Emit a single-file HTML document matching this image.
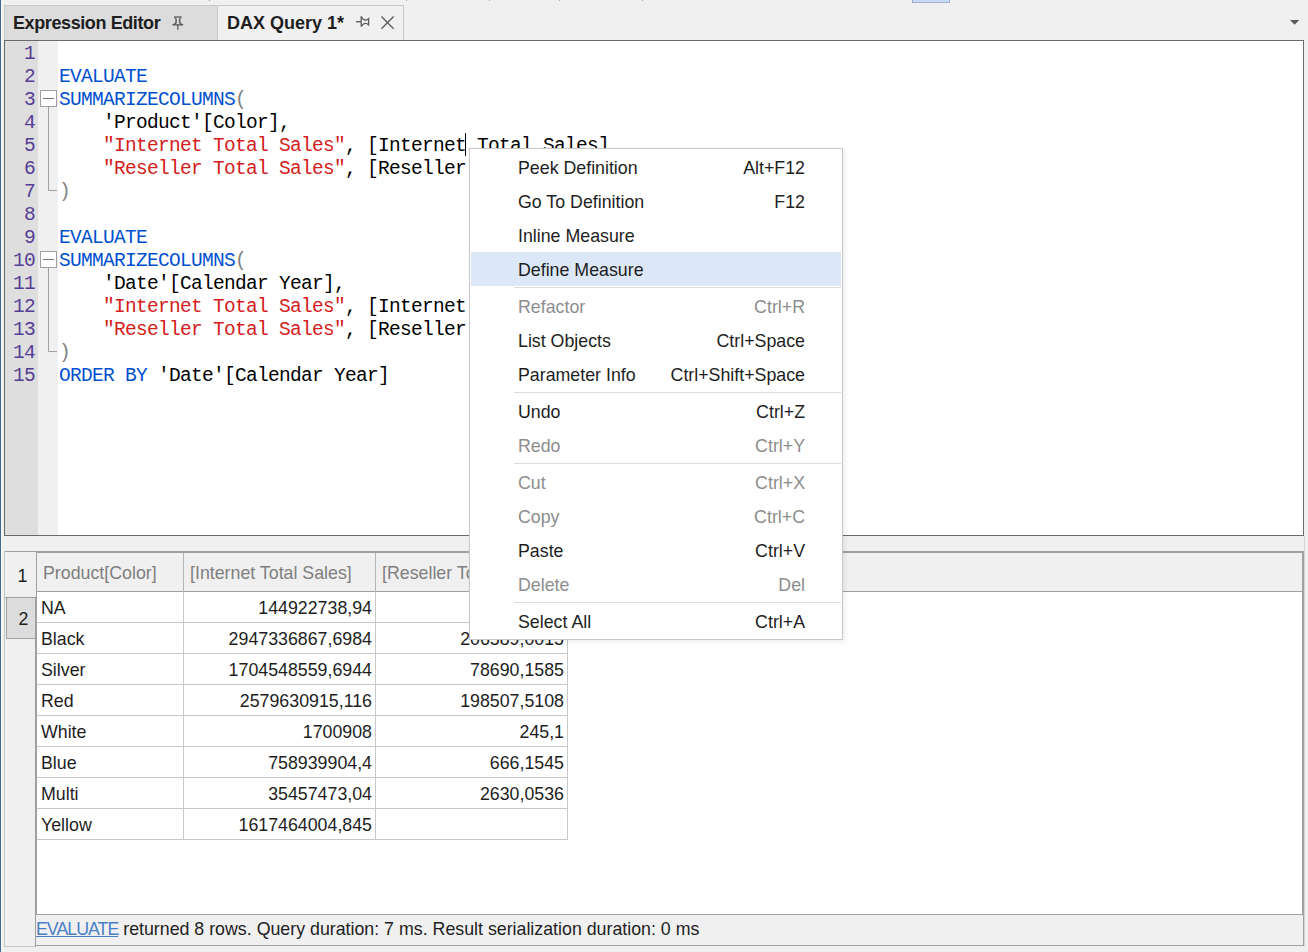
<!DOCTYPE html>
<html><head><meta charset="utf-8"><style>
*{box-sizing:border-box;margin:0;padding:0}
html,body{width:1308px;height:952px;overflow:hidden;background:#f0f0f0;font-family:"Liberation Sans",sans-serif;position:relative}
.abs{position:absolute}
.tab{position:absolute;top:5px;height:35px;font-weight:bold;font-size:18px;color:#1e1e1e;line-height:35px;white-space:nowrap}
#editor{position:absolute;left:4px;top:40px;width:1300px;height:496px;border:1px solid #6b6b6b;background:#fff;overflow:hidden}
#gut{position:absolute;left:0;top:0;width:33px;height:100%;background:#dedede}
#fold{position:absolute;left:33px;top:0;width:20px;height:100%;background:#f0f0f0}
.ln{position:absolute;left:0;width:30px;text-align:right;height:23px;line-height:23px;font-family:"Liberation Mono",monospace;font-size:19.5px;letter-spacing:-0.7px;color:#563d94}
.cl{position:absolute;left:54px;height:23px;line-height:23px;font-family:"Liberation Mono",monospace;font-size:19.5px;letter-spacing:-0.7px;color:#000;white-space:pre}
.k{color:#0050d0}.s{color:#d4201c}.p{color:#808080}
#menu{position:absolute;left:469px;top:148px;width:374px;height:492px;background:#fff;border:1px solid #c8c8c8;box-shadow:2px 2px 5px rgba(0,0,0,0.07);padding:1px}
.mi{position:relative;height:34px;line-height:34px;font-size:17.8px;color:#1e1e1e;white-space:nowrap}
.mi .t{position:absolute;left:47px;top:1px}
.mi .sc{position:absolute;right:36px;top:1px}
.mi.dis{color:#8d8d8d}
.mi.hl{background:#dce7f8}
.sep{height:3px;position:relative}
.sep:after{content:"";position:absolute;left:43px;right:0;top:1px;height:1px;background:#dcdcdc}
.cell{position:absolute;height:31px;line-height:31px;font-size:17.8px;color:#1e1e1e;white-space:nowrap;overflow:hidden}
</style></head><body>
<div class="abs" style="left:0;top:0;width:1px;height:952px;background:#41649a"></div>
<div class="abs" style="left:1px;top:0;width:1px;height:952px;background:#fbfbfb"></div>
<div class="abs" style="left:209px;top:0;width:1px;height:1px;background:#9a9a9a"></div><div class="abs" style="left:406px;top:0;width:1px;height:1px;background:#b0b0b0"></div><div class="abs" style="left:489px;top:0;width:1px;height:1px;background:#b0b0b0"></div><div class="abs" style="left:559px;top:0;width:1px;height:1px;background:#b0b0b0"></div><div class="abs" style="left:642px;top:0;width:1px;height:1px;background:#b0b0b0"></div>
<div class="abs" style="left:912px;top:0;width:38px;height:3px;background:#c9daf4;border:1px solid #9fb0cf;border-top:none"></div>
<div class="tab" style="left:4px;width:214px;background:#dcdcdc;border-top:1px solid #c8c8c8;border-left:1px solid #c8c8c8;border-right:1px solid #c8c8c8"><span style="position:absolute;left:8px;letter-spacing:-0.4px">Expression Editor</span></div>
<div class="tab" style="left:218px;width:186px;background:#f0f0f0;border-top:1px solid #c8c8c8;border-right:1px solid #c8c8c8"><span style="position:absolute;left:9px">DAX Query 1*</span></div>
<svg class="abs" style="left:1285px;top:15px" width="20" height="15"><polygon points="5,5 14.2,5 9.6,9.8" fill="#5a5a5a"/></svg>
<svg class="abs" style="left:168px;top:12px" width="20" height="20" viewBox="0 0 20 20" fill="none" stroke="#5a5a5a" stroke-width="1.3">
<path d="M6,5 H13.7"/><path d="M7.3,5.5 Q9.2,8.5 7.6,11.6 L4.5,12.8 H15 L12.2,11.6 Q10.6,8.5 12.5,5.5"/><path d="M9.8,12.8 V17.8"/></svg>
<svg class="abs" style="left:352px;top:12px" width="20" height="20" viewBox="0 0 20 20" fill="none" stroke="#5a5a5a" stroke-width="1.3">
<path d="M4,9.7 H9.2"/><path d="M9.2,4.3 V14.6"/><path d="M9.4,4.8 Q11,7.8 13,8 Q15,8.2 16.6,6.6 V12.9 Q15,11.2 13,11.4 Q11,11.6 9.4,14.4"/></svg>
<svg class="abs" style="left:380px;top:15px" width="16" height="16" viewBox="0 0 16 16" fill="none" stroke="#5f5f5f" stroke-width="1.4">
<path d="M1.4,1.6 L13.6,13.8 M13.6,1.6 L1.4,13.8"/></svg>
<div id="editor"><div id="gut"></div><div id="fold"></div>
<svg class="abs" style="left:35px;top:49px" width="22" height="320" viewBox="0 0 22 320" fill="none" stroke="#a0a0a0" stroke-width="1">
<rect x="0.5" y="0.5" width="16" height="16" fill="#fff"/><path d="M3,8.5 H14" stroke="#7a7a7a"/><path d="M8.5,17 V100.5 H17"/>
<rect x="0.5" y="161.5" width="16" height="16" fill="#fff"/><path d="M3,169.5 H14" stroke="#7a7a7a"/><path d="M8.5,178 V261.5 H17"/>
</svg>
<div class="ln" style="top:2px">1</div>
<div class="ln" style="top:25px">2</div>
<div class="cl" style="top:25px"><span class="k">EVALUATE</span></div>
<div class="ln" style="top:48px">3</div>
<div class="cl" style="top:48px"><span class="k">SUMMARIZECOLUMNS</span><span class="p">(</span></div>
<div class="ln" style="top:71px">4</div>
<div class="cl" style="top:71px">    'Product'[Color],</div>
<div class="ln" style="top:94px">5</div>
<div class="cl" style="top:94px">    <span class="s">"Internet Total Sales"</span>, [Internet Total Sales]</div>
<div class="ln" style="top:117px">6</div>
<div class="cl" style="top:117px">    <span class="s">"Reseller Total Sales"</span>, [Reseller Total Sales]</div>
<div class="ln" style="top:140px">7</div>
<div class="cl" style="top:140px"><span class="p">)</span></div>
<div class="ln" style="top:163px">8</div>
<div class="ln" style="top:186px">9</div>
<div class="cl" style="top:186px"><span class="k">EVALUATE</span></div>
<div class="ln" style="top:209px">10</div>
<div class="cl" style="top:209px"><span class="k">SUMMARIZECOLUMNS</span><span class="p">(</span></div>
<div class="ln" style="top:232px">11</div>
<div class="cl" style="top:232px">    'Date'[Calendar Year],</div>
<div class="ln" style="top:255px">12</div>
<div class="cl" style="top:255px">    <span class="s">"Internet Total Sales"</span>, [Internet Total Sales]</div>
<div class="ln" style="top:278px">13</div>
<div class="cl" style="top:278px">    <span class="s">"Reseller Total Sales"</span>, [Reseller Total Sales]</div>
<div class="ln" style="top:301px">14</div>
<div class="cl" style="top:301px"><span class="p">)</span></div>
<div class="ln" style="top:324px">15</div>
<div class="cl" style="top:324px"><span class="k">ORDER BY</span> 'Date'[Calendar Year]</div>
<div class="abs" style="left:460px;top:92px;width:1px;height:23px;background:#000"></div>
</div>
<div class="abs" style="left:4px;top:551px;width:1300px;height:1px;background:#a0a0a0"></div>
<div class="abs" style="left:4px;top:551px;width:1px;height:396px;background:#c8c8c8"></div>
<div class="abs" style="left:4px;top:946px;width:32px;height:1px;background:#c8c8c8"></div>
<div class="abs" style="left:1302px;top:551px;width:2px;height:364px;background:#a0a0a0"></div>
<div class="abs" style="left:1303px;top:914px;width:1px;height:32px;background:#a0a0a0"></div>
<div class="abs" style="left:1304px;top:536px;width:1px;height:410px;background:#d4d4d4"></div>
<div class="abs" style="left:36px;top:552px;width:1266px;height:1px;background:#a0a0a0"></div>
<div class="abs" style="left:5px;top:552px;width:31px;height:46px;background:#f0f0f0;border-bottom:1px solid #a0a0a0;font-size:17.8px;line-height:48px;text-align:center;color:#1e1e1e;padding-left:4px">1</div>
<div class="abs" style="left:6px;top:598px;width:29px;height:41px;background:#dcdcdc;border-left:1px solid #a0a0a0;border-bottom:1px solid #a0a0a0;font-size:17.8px;line-height:42px;text-align:center;color:#1e1e1e;padding-left:5px">2</div>
<div class="abs" style="left:35px;top:597px;width:1px;height:350px;background:#a0a0a0"></div>
<div class="abs" style="left:36px;top:552px;width:1px;height:362px;background:#a0a0a0"></div>
<div class="abs" style="left:37px;top:553px;width:1265px;height:361px;background:#fff"></div>
<div class="abs" style="left:37px;top:553px;width:1265px;height:39px;background:#f0f0f0;border-bottom:1px solid #a0a0a0"></div>
<div class="cell" style="left:37px;top:553px;width:146px;height:38px;line-height:40px;padding-left:6px;color:#7f7f7f">Product[Color]</div>
<div class="abs" style="left:183px;top:553px;width:1px;height:39px;background:#b4b4b4"></div>
<div class="cell" style="left:184px;top:553px;width:191px;height:38px;line-height:40px;padding-left:6px;color:#7f7f7f">[Internet Total Sales]</div>
<div class="abs" style="left:375px;top:553px;width:1px;height:39px;background:#b4b4b4"></div>
<div class="cell" style="left:376px;top:553px;width:191px;height:38px;line-height:40px;padding-left:6px;color:#7f7f7f">[Reseller Total Sales]</div>
<div class="abs" style="left:567px;top:553px;width:1px;height:39px;background:#b4b4b4"></div>
<div class="cell" style="left:37px;top:593px;width:146px;padding-left:4px">NA</div>
<div class="cell" style="left:184px;top:593px;width:191px;padding-right:3px;text-align:right">144922738,94</div>
<div class="cell" style="left:376px;top:593px;width:191px;padding-right:3px;text-align:right"></div>
<div class="abs" style="left:37px;top:622px;width:531px;height:1px;background:#c8c8c8"></div>
<div class="cell" style="left:37px;top:624px;width:146px;padding-left:4px">Black</div>
<div class="cell" style="left:184px;top:624px;width:191px;padding-right:3px;text-align:right">2947336867,6984</div>
<div class="cell" style="left:376px;top:624px;width:191px;padding-right:3px;text-align:right">206589,0015</div>
<div class="abs" style="left:37px;top:653px;width:531px;height:1px;background:#c8c8c8"></div>
<div class="cell" style="left:37px;top:655px;width:146px;padding-left:4px">Silver</div>
<div class="cell" style="left:184px;top:655px;width:191px;padding-right:3px;text-align:right">1704548559,6944</div>
<div class="cell" style="left:376px;top:655px;width:191px;padding-right:3px;text-align:right">78690,1585</div>
<div class="abs" style="left:37px;top:684px;width:531px;height:1px;background:#c8c8c8"></div>
<div class="cell" style="left:37px;top:686px;width:146px;padding-left:4px">Red</div>
<div class="cell" style="left:184px;top:686px;width:191px;padding-right:3px;text-align:right">2579630915,116</div>
<div class="cell" style="left:376px;top:686px;width:191px;padding-right:3px;text-align:right">198507,5108</div>
<div class="abs" style="left:37px;top:715px;width:531px;height:1px;background:#c8c8c8"></div>
<div class="cell" style="left:37px;top:717px;width:146px;padding-left:4px">White</div>
<div class="cell" style="left:184px;top:717px;width:191px;padding-right:3px;text-align:right">1700908</div>
<div class="cell" style="left:376px;top:717px;width:191px;padding-right:3px;text-align:right">245,1</div>
<div class="abs" style="left:37px;top:746px;width:531px;height:1px;background:#c8c8c8"></div>
<div class="cell" style="left:37px;top:748px;width:146px;padding-left:4px">Blue</div>
<div class="cell" style="left:184px;top:748px;width:191px;padding-right:3px;text-align:right">758939904,4</div>
<div class="cell" style="left:376px;top:748px;width:191px;padding-right:3px;text-align:right">666,1545</div>
<div class="abs" style="left:37px;top:777px;width:531px;height:1px;background:#c8c8c8"></div>
<div class="cell" style="left:37px;top:779px;width:146px;padding-left:4px">Multi</div>
<div class="cell" style="left:184px;top:779px;width:191px;padding-right:3px;text-align:right">35457473,04</div>
<div class="cell" style="left:376px;top:779px;width:191px;padding-right:3px;text-align:right">2630,0536</div>
<div class="abs" style="left:37px;top:808px;width:531px;height:1px;background:#c8c8c8"></div>
<div class="cell" style="left:37px;top:810px;width:146px;padding-left:4px">Yellow</div>
<div class="cell" style="left:184px;top:810px;width:191px;padding-right:3px;text-align:right">1617464004,845</div>
<div class="cell" style="left:376px;top:810px;width:191px;padding-right:3px;text-align:right"></div>
<div class="abs" style="left:37px;top:839px;width:531px;height:1px;background:#c8c8c8"></div>
<div class="abs" style="left:183px;top:592px;width:1px;height:248px;background:#c8c8c8"></div>
<div class="abs" style="left:375px;top:592px;width:1px;height:248px;background:#c8c8c8"></div>
<div class="abs" style="left:567px;top:592px;width:1px;height:248px;background:#c8c8c8"></div>
<div class="abs" style="left:36px;top:914px;width:1266px;height:1px;background:#a0a0a0"></div>
<div class="abs" style="left:36px;top:945px;width:1268px;height:1px;background:#a0a0a0"></div>
<div class="cell" style="left:36px;top:914px;width:1265px;height:30px;line-height:30px;padding-left:0px;letter-spacing:0px"><span style="color:#4a7fc8;text-decoration:underline;letter-spacing:-1px">EVALUATE</span> returned 8 rows. Query duration: 7 ms. Result serialization duration: 0 ms</div>
<div id="menu">
<div class="mi "><span class="t">Peek Definition</span><span class="sc">Alt+F12</span></div>
<div class="mi "><span class="t">Go To Definition</span><span class="sc">F12</span></div>
<div class="mi "><span class="t">Inline Measure</span></div>
<div class="mi hl"><span class="t">Define Measure</span></div>
<div class="sep"></div>
<div class="mi dis"><span class="t">Refactor</span><span class="sc">Ctrl+R</span></div>
<div class="mi "><span class="t">List Objects</span><span class="sc">Ctrl+Space</span></div>
<div class="mi "><span class="t">Parameter Info</span><span class="sc">Ctrl+Shift+Space</span></div>
<div class="sep"></div>
<div class="mi "><span class="t">Undo</span><span class="sc">Ctrl+Z</span></div>
<div class="mi dis"><span class="t">Redo</span><span class="sc">Ctrl+Y</span></div>
<div class="sep"></div>
<div class="mi dis"><span class="t">Cut</span><span class="sc">Ctrl+X</span></div>
<div class="mi dis"><span class="t">Copy</span><span class="sc">Ctrl+C</span></div>
<div class="mi "><span class="t">Paste</span><span class="sc">Ctrl+V</span></div>
<div class="mi dis"><span class="t">Delete</span><span class="sc">Del</span></div>
<div class="sep"></div>
<div class="mi "><span class="t">Select All</span><span class="sc">Ctrl+A</span></div>
</div>
</body></html>
